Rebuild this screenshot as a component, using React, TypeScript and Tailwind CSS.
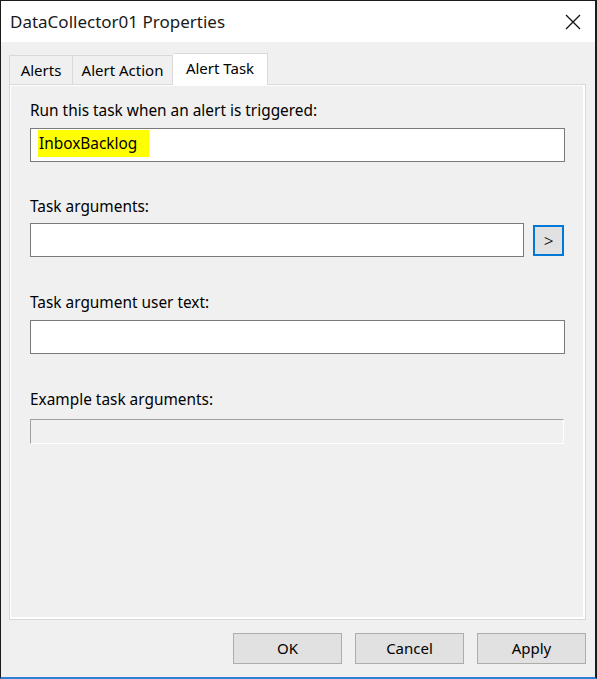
import React from "react";

const font = { fontFamily: '"Noto Sans", "Open Sans", sans-serif' };

function TextBox({ className = "", children }: { className?: string; children?: React.ReactNode }) {
  return (
    <div className={`h-[34px] bg-white border border-[#7a7a7a] flex items-center pl-[7px] ${className}`}>
      {children}
    </div>
  );
}

function DialogButton({ label }: { label: string }) {
  return (
    <button className="w-[109px] h-[31px] bg-[#e1e1e1] border border-[#adadad] text-[15px] text-black leading-none">
      {label}
    </button>
  );
}

export default function App() {
  return (
    <div
      style={font}
      className="w-[597px] h-[679px] flex flex-col bg-[#f0f0f0] border-t border-l border-r-2 border-[#1b1b1b] border-b-2 border-b-[#2f7fd6] text-black"
    >
      {/* Title bar */}
      <div className="h-[41px] bg-white flex items-center justify-between pl-[9px] pr-[14px] shrink-0">
        <span className="text-[17px] text-[#1a1a1a]">DataCollector01 Properties</span>
        <svg width="16" height="16" viewBox="0 0 16 16" className="mt-[1px]">
          <path d="M1 1 L15 15 M15 1 L1 15" stroke="#111" strokeWidth="1.3" fill="none" />
        </svg>
      </div>

      {/* Body */}
      <div className="flex-1 flex flex-col pl-[8px] pr-[9px] pt-[11px]">
        {/* Tabs */}
        <div className="flex items-end h-[31px] relative z-10 text-[15px]">
          <div className="w-[64px] h-[29px] border border-b-0 border-[#d9d9d9] flex items-center justify-center bg-[#f0f0f0]">
            Alerts
          </div>
          <div className="w-[100px] h-[29px] border border-l-0 border-b-0 border-[#d9d9d9] flex items-center justify-center bg-[#f0f0f0]">
            Alert Action
          </div>
          <div className="w-[95px] h-[32px] border border-l-0 border-b-0 border-[#d9d9d9] flex items-center justify-center bg-white mb-[-1px] pb-[3px]">
            Alert Task
          </div>
        </div>

        {/* Tab page */}
        <div className="h-[536px] border border-[#d9d9d9] shadow-[inset_1px_1px_0_#ffffff,inset_-2px_-2px_0_#ffffff] px-[20px] pt-[16px] flex flex-col text-[15.4px]">
          <div className="h-[20px] leading-[20px]">Run this task when an alert is triggered:</div>
          <TextBox className="mt-[7px]">
            <span className="bg-[#ffff00] h-[27px] leading-[27px] pl-[1px] pr-[12px] mt-[-3px]">InboxBacklog</span>
          </TextBox>

          <div className="h-[20px] leading-[20px] mt-[35px]">Task arguments:</div>
          <div className="flex items-center mt-[6px]">
            <TextBox className="w-[494px] h-[33px]" />
            <button className="ml-[9px] w-[31px] h-[31px] bg-[#e1e1e1] border-2 border-[#0078d7] flex items-center justify-center">
              <span className="text-[17px] leading-none font-light">&gt;</span>
            </button>
          </div>

          <div className="h-[20px] leading-[20px] mt-[36px]">Task argument user text:</div>
          <TextBox className="mt-[7px]" />

          <div className="h-[20px] leading-[20px] mt-[36px]">Example task arguments:</div>
          <div className="h-[25px] mt-[9px] mr-[1px] border border-[#a0a0a0] border-r-white border-b-white bg-[#f0f0f0]" />
        </div>

        {/* Buttons */}
        <div className="flex justify-end gap-[13px] mt-[13px]">
          <DialogButton label="OK" />
          <DialogButton label="Cancel" />
          <DialogButton label="Apply" />
        </div>
      </div>
    </div>
  );
}
